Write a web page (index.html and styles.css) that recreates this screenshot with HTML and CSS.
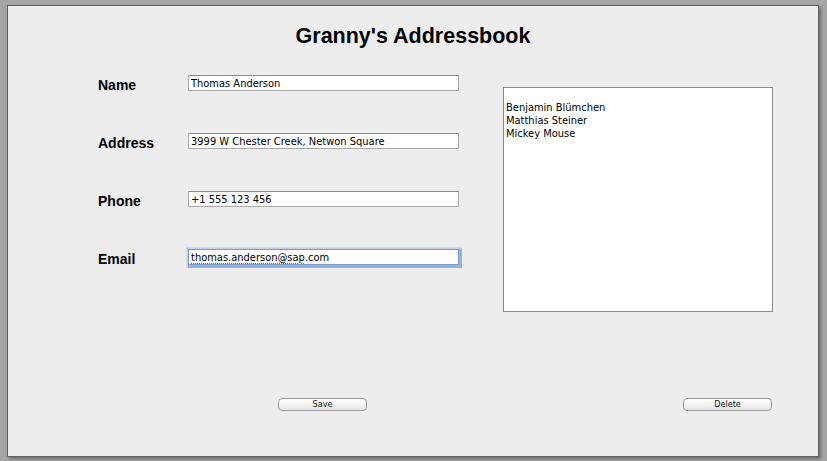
FILE: index.html
```html
<!DOCTYPE html>
<html>
<head>
<meta charset="utf-8">
<title>Granny's Addressbook</title>
<link rel="stylesheet" href="styles.css">
</head>
<body>
<div class="window">
  <h1 class="title">Granny's Addressbook</h1>
  <div class="main">
    <div class="form">
      <div class="row"><div class="label">Name</div><div class="field">Thomas Anderson</div></div>
      <div class="row"><div class="label">Address</div><div class="field">3999 W Chester Creek, Netwon Square</div></div>
      <div class="row"><div class="label">Phone</div><div class="field">+1 555 123 456</div></div>
      <div class="row"><div class="label">Email</div><div class="field focused"><span class="misspelled">thomas.anderson@sap</span>.com</div></div>
    </div>
    <div class="list">
      <div class="item">Benjamin Blümchen</div>
      <div class="item">Matthias Steiner</div>
      <div class="item">Mickey Mouse</div>
    </div>
  </div>
  <div class="actions">
    <button class="btn save">Save</button>
    <button class="btn delete">Delete</button>
  </div>
</div>
</body>
</html>
```
FILE: styles.css
```css
html, body {
  margin: 0;
  padding: 0;
  background: #a5a5a5;
}
body {
  width: 827px;
  height: 461px;
  overflow: hidden;
}
.window {
  box-sizing: border-box;
  margin: 5px 0 0 7px;
  width: 812px;
  height: 452px;
  background: #ededed;
  border: 1px solid #5f5f5f;
  box-shadow: 2px 2px 3px rgba(0,0,0,0.35);
  display: flex;
  flex-direction: column;
}
.title {
  margin: 18px 0 0;
  font-family: "Liberation Sans", Arial, sans-serif;
  font-weight: bold;
  font-size: 21.5px;
  line-height: 25px;
  text-align: center;
  color: #000;
}
.main {
  display: flex;
  margin-top: 26px;
}
.form {
  margin-left: 90px;
  display: flex;
  flex-direction: column;
}
.row {
  display: flex;
  height: 58px;
}
.label {
  width: 90px;
  margin-top: 2px;
  font-family: "Liberation Sans", Arial, sans-serif;
  font-weight: bold;
  font-size: 14px;
  line-height: 16px;
  color: #000;
}
.field {
  box-sizing: border-box;
  width: 271px;
  height: 16px;
  background: #fff;
  border: 1px solid #aaaaaa;
  border-top-color: #8c8c8c;
  padding: 1px 2px 0 2px;
  font-family: "DejaVu Sans Condensed", "DejaVu Sans", sans-serif;
  font-stretch: condensed;
  font-size: 11px;
  line-height: 13px;
  color: #000;
  white-space: nowrap;
  overflow: hidden;
}
.field.focused {
  border-color: #7d9cc8;
  box-shadow: 0 0 1px 2.5px rgba(130,168,218,0.85);
}
.misspelled {
  text-decoration: underline dotted #e03020;
  text-underline-offset: 2px;
}
.list {
  box-sizing: border-box;
  margin-left: 44px;
  margin-top: 12px;
  width: 270px;
  height: 225px;
  background: #fff;
  border: 1px solid #8a8a8a;
  padding: 13px 2px 0;
  font-family: "DejaVu Sans Condensed", "DejaVu Sans", sans-serif;
  font-stretch: condensed;
  font-size: 11px;
  line-height: 13px;
  color: #000;
}
.actions {
  display: flex;
  margin-top: 86px;
}
.btn {
  box-sizing: border-box;
  width: 89px;
  height: 13px;
  padding: 0;
  border: 1px solid #9a9a9a;
  border-radius: 4px;
  background: linear-gradient(#ffffff, #f3f3f3 50%, #e4e4e4);
  font-family: "DejaVu Sans Condensed", "DejaVu Sans", sans-serif;
  font-stretch: condensed;
  font-weight: normal;
  font-size: 9px;
  line-height: 11px;
  color: #111;
}
.save {
  margin-left: 270px;
}
.delete {
  margin-left: 316px;
}
```
